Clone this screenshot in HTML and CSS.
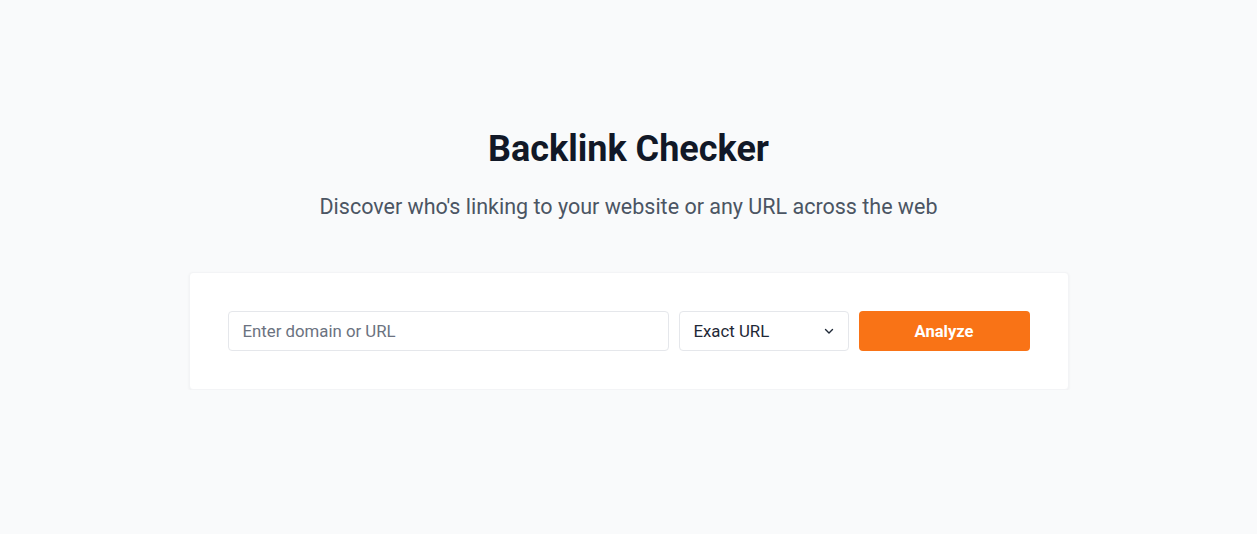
FILE: index.html
```html
<!DOCTYPE html>
<html lang="en">
<head>
	<meta charset="UTF-8">
	<meta name="viewport" content="width=device-width, initial-scale=1.0">
	<title>Backlink Checker</title>
	<link rel="stylesheet" href="styles.css">
</head>
<body>

<div class="page">
	<h1 class="title">Backlink Checker</h1>
	<p class="subtitle">Discover who's linking to your website or any URL across the web</p>

	<div class="card">
		<form class="search" onsubmit="return false">
			<input type="text" class="search_input" placeholder="Enter domain or URL">
			<div class="select_wrap">
				<select class="search_mode">
					<option>Exact URL</option>
					<option>Domain</option>
					<option>Subdomains</option>
				</select>
				<svg class="chevron" width="12" height="12" viewBox="0 0 12 12" fill="none">
					<path d="M2.5 4.5 L6 8 L9.5 4.5" stroke="#1f2937" stroke-width="1.4" stroke-linecap="round" stroke-linejoin="round"/>
				</svg>
			</div>
			<button type="submit" class="search_btn">Analyze</button>
		</form>
	</div>
</div>

</body>
</html>
```

FILE: styles.css
```css
html, body {
	margin: 0;
	padding: 0;
	background-color: #f9fafb;
	font-family: Roboto, "Liberation Sans", sans-serif;
}

.page {
	display: flex;
	flex-direction: column;
	align-items: center;
	padding-top: 129px;
}

.title {
	margin: 0;
	font-size: 36px;
	line-height: 40px;
	font-weight: 700;
	color: #111827;
}

.subtitle {
	margin: 23px 0 0;
	font-size: 21.5px;
	line-height: 30px;
	color: #4b5563;
}

.card {
	box-sizing: border-box;
	width: 880px;
	margin-top: 50px;
	padding: 38px;
	background-color: #fff;
	border: 1px solid #f3f4f6;
	border-radius: 4px;
	box-shadow: 0 1px 3px rgba(0, 0, 0, 0.05);
}

.search {
	display: flex;
	gap: 10px;
}

.search_input {
	flex: 1;
	box-sizing: border-box;
	height: 40px;
	padding: 0 14px;
	font-family: inherit;
	font-size: 16.8px;
	color: #1f2937;
	border: 1px solid #e5e7eb;
	border-radius: 4px;
	outline: none;
}

.search_input::placeholder {
	color: #6b7280;
}

.select_wrap {
	position: relative;
	width: 170px;
}

.search_mode {
	appearance: none;
	box-sizing: border-box;
	width: 100%;
	height: 40px;
	padding: 0 14px;
	font-family: inherit;
	font-size: 16.8px;
	color: #1f2937;
	background-color: #fff;
	border: 1px solid #e5e7eb;
	border-radius: 4px;
	outline: none;
}

.chevron {
	position: absolute;
	right: 14px;
	top: 14px;
	pointer-events: none;
}

.search_btn {
	width: 171px;
	height: 40px;
	font-family: inherit;
	font-size: 16.5px;
	font-weight: 700;
	color: #fff;
	background-color: #f97316;
	border: none;
	border-radius: 4px;
	cursor: pointer;
}

.search_btn:hover {
	background-color: #ea580c;
}
```
